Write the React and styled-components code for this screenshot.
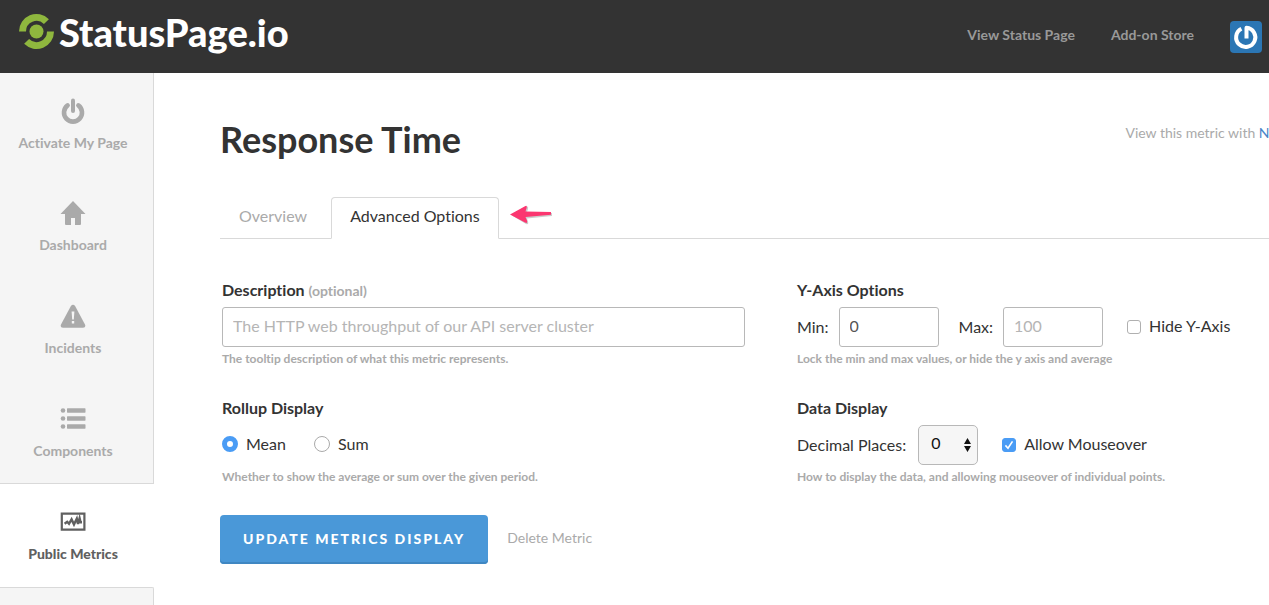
import React, { useState } from "react";
import styled, { createGlobalStyle, ThemeProvider } from "styled-components";

const theme = {
  font: '"Lato", "Open Sans", sans-serif',
  header: "#333333",
  text: "#333333",
  muted: "#aaaaaa",
  line: "#d9d9d9",
  field: "#b8b8b8",
  side: "#f5f5f5",
  green: "#8fb73e",
  blue: "#4a98d8",
  check: "#4a9cf5",
};

const GlobalStyle = createGlobalStyle`
  * {
    box-sizing: border-box;
  }

  body {
    margin: 0;
    background: #ffffff;
    color: ${({ theme }) => theme.text};
    font-family: ${({ theme }) => theme.font};
    font-size: 16px;
    font-variant-ligatures: none;
    line-height: 20px;
  }

  input, select, button {
    font: inherit;
    color: inherit;
  }

  a {
    text-decoration: none;
  }
`;

const Page = styled.div`
  display: flex;
  flex-direction: column;
  height: 100vh;
  overflow: hidden;
`;

const Header = styled.header`
  display: flex;
  flex: none;
  align-items: center;
  justify-content: space-between;
  height: 73px;
  padding: 0 7px 0 18px;
  background: ${({ theme }) => theme.header};
`;

const Logo = styled.a`
  display: flex;
  align-items: center;
  gap: 4px;
  padding-bottom: 10px;
  color: #ffffff;
  font-size: 38px;
  font-weight: 900;
  line-height: 40px;
`;

const TopNav = styled.nav`
  display: flex;
  align-items: center;
  gap: 36px;
`;

const TopLink = styled.a`
  padding-bottom: 3px;
  color: #999999;
  font-size: 14px;
  font-weight: 700;
`;

const Avatar = styled.button`
  display: flex;
  align-items: center;
  justify-content: center;
  width: 32px;
  height: 32px;
  padding: 0;
  border: none;
  border-radius: 4px;
  background: #2b76b4;
  cursor: pointer;
`;

const Body = styled.div`
  display: flex;
  flex: 1;
  min-height: 0;
`;

const Sidebar = styled.nav`
  display: flex;
  flex: none;
  flex-direction: column;
  width: 154px;
`;

const SideLink = styled.a`
  display: flex;
  flex: none;
  flex-direction: column;
  align-items: center;
  gap: 9px;
  height: 103px;
  padding: 25px 7px 0 0;
  border-right: 1px solid ${({ theme, $active }) => ($active ? "transparent" : theme.line)};
  background: ${({ theme, $active }) => ($active ? "#ffffff" : theme.side)};
  box-shadow: ${({ theme, $active }) => ($active ? `0 -1px 0 ${theme.line}` : "none")};
  color: ${({ theme, $active }) => ($active ? "#606060" : theme.muted)};
  font-size: 14px;
  font-weight: ${({ $active }) => ($active ? 900 : 700)};
  white-space: nowrap;

  &:first-child {
    height: 102px;
  }
`;

const SideRest = styled.div`
  flex: 1;
  border: solid ${({ theme }) => theme.line};
  border-width: 1px 1px 0 0;
  border-top-right-radius: 2px;
  background: ${({ theme }) => theme.side};
`;

const Main = styled.main`
  flex: 1;
  min-width: 0;
  padding: 47px 0 0 66px;
  overflow: hidden;
`;

const Content = styled.div`
  min-width: 1100px;
`;

const TitleRow = styled.div`
  display: flex;
  align-items: flex-start;
  justify-content: space-between;
`;

const Title = styled.h1`
  margin: 0;
  font-size: 36px;
  font-weight: 700;
  line-height: 38px;
`;

const MetricNote = styled.p`
  margin: 0;
  padding-top: 3px;
  color: ${({ theme }) => theme.muted};
  font-size: 14px;

  a {
    color: #4a86c8;
  }
`;

const Tabs = styled.div`
  display: flex;
  align-items: flex-end;
  gap: 5px;
  height: 42px;
  margin-top: 39px;
  box-shadow: inset 0 -1px 0 ${({ theme }) => theme.line};
`;

const Tab = styled.button`
  height: 42px;
  padding: 0 18px 4px;
  border: 1px solid transparent;
  border-radius: 4px 4px 0 0;
  background: transparent;
  color: ${({ theme }) => theme.muted};
  cursor: pointer;

  &[aria-selected="true"] {
    border-color: ${({ theme }) => theme.line};
    border-bottom-color: #ffffff;
    background: #ffffff;
    color: ${({ theme }) => theme.text};
  }
`;

const Pointer = styled.svg`
  margin: 0 0 12px 5px;
`;

const Fields = styled.form`
  padding-top: 41px;
`;

const FieldGrid = styled.div`
  display: grid;
  grid-template-columns: 1fr 1fr;
  gap: 31px 52px;
  padding-left: 2px;
`;

const Group = styled.fieldset`
  display: flex;
  flex-direction: column;
  min-width: 0;
  margin: 0;
  padding: 0;
  border: none;
`;

const GroupLabel = styled.legend`
  padding: 0;
  margin-bottom: 7px;
  font-weight: 700;

  span {
    color: ${({ theme }) => theme.muted};
    font-size: 14px;
    line-height: 1;
  }
`;

const Controls = styled.div`
  display: flex;
  align-items: center;
  gap: ${({ $gap }) => $gap || 24}px;
  height: 40px;
`;

const TextInput = styled.input`
  width: ${({ $short }) => ($short ? "100px" : "100%")};
  height: 40px;
  padding: 0 10px 4px;
  border: 1px solid ${({ theme }) => theme.field};
  border-radius: 3px;
  background: #ffffff;
  color: #555555;
  outline: none;

  &::placeholder {
    color: #b5b5b5;
    opacity: 1;
  }
`;

const InlineLabel = styled.label`
  display: flex;
  align-items: center;
  gap: ${({ $gap }) => $gap || 12}px;
  white-space: nowrap;
`;

const CheckLabel = styled(InlineLabel)`
  gap: 8px;
  padding-bottom: 3px;
`;

const Checkbox = styled.input`
  appearance: none;
  width: 14px;
  height: 14px;
  margin: 3px 0 0;
  border: 1px solid #b0b0b0;
  border-radius: 3px;
  background: #ffffff;

  &:checked {
    border-color: ${({ theme }) => theme.check};
    background: ${({ theme }) => theme.check};
  }
`;

const CheckWrap = styled.span`
  position: relative;
  display: flex;

  svg {
    position: absolute;
    top: 3px;
    left: 0;
    pointer-events: none;
  }
`;

const Radio = styled.input`
  appearance: none;
  width: 16px;
  height: 16px;
  margin: 0;
  border: 1px solid #aaaaaa;
  border-radius: 50%;
  background: #ffffff;

  &:checked {
    border: 5px solid ${({ theme }) => theme.check};
  }
`;

const SelectWrap = styled.span`
  position: relative;
  display: flex;

  svg {
    position: absolute;
    top: 12px;
    right: 6px;
    pointer-events: none;
  }
`;

const Select = styled.select`
  appearance: none;
  width: 60px;
  height: 40px;
  padding: 0 12px 4px;
  border: 1px solid ${({ theme }) => theme.field};
  border-radius: 5px;
  background: #f6f6f6;
  color: #111111;
`;

const Hint = styled.p`
  margin: 4px 0 0;
  color: ${({ theme }) => theme.muted};
  font-size: 12px;
  font-weight: 700;
  line-height: 16px;
`;

const Actions = styled.div`
  display: flex;
  align-items: center;
  gap: 19px;
  margin-top: 30px;
`;

const SubmitButton = styled.button`
  height: 49px;
  padding: 0 23px 2px;
  border: none;
  border-radius: 4px;
  background: ${({ theme }) => theme.blue};
  box-shadow: inset 0 -2px 0 #3f87c2;
  color: #ffffff;
  font-size: 14px;
  font-weight: 900;
  letter-spacing: 2px;
  text-transform: uppercase;
  cursor: pointer;
`;

const DeleteLink = styled.a`
  padding-bottom: 3px;
  color: ${({ theme }) => theme.muted};
  font-size: 14px;
`;

const LogoMark = () => (
  <svg width="37" height="37" viewBox="0 0 37 37" aria-hidden="true">
    <circle cx="18.5" cy="18.5" r="7" fill={theme.green} />
    <g fill="none" stroke={theme.green} strokeWidth="7">
      <path d="M4.5 18.5A14 14 0 0 1 28.4 8.6" />
      <path d="M32.5 18.5A14 14 0 0 1 8.6 28.4" />
    </g>
  </svg>
);

const PowerMark = () => (
  <svg width="26" height="26" viewBox="0 0 26 26" fill="none" stroke="#ffffff" strokeWidth="4" aria-hidden="true">
    <path d="M8.4 4.8A9.6 9.6 0 1 0 13.5 3.8V14.5" strokeLinejoin="round" />
  </svg>
);

const PowerIcon = () => (
  <svg width="26" height="26" viewBox="0 0 26 26" fill="none" stroke="currentColor" strokeLinecap="round" aria-hidden="true">
    <path d="M13 2.5V13" strokeWidth="4" />
    <path d="M7.6 7.4A9 9 0 1 0 18.4 7.4" strokeWidth="4.6" />
  </svg>
);

const HomeIcon = () => (
  <svg width="26" height="26" viewBox="0 0 26 26" fill="currentColor" aria-hidden="true">
    <path d="M13 1L25.5 14H21V24a1 1 0 0 1-1 1H15V18H11V25H6a1 1 0 0 1-1-1V14H.5Z" />
  </svg>
);

const WarningIcon = () => (
  <svg width="26" height="26" viewBox="0 0 26 26" aria-hidden="true">
    <path
      fill="currentColor"
      d="M10.9 3Q13 .4 15.1 3L25 21.4Q26.2 24.5 23 24.7H3Q-.2 24.5 1 21.4Z"
    />
    <path d="M11.6 8.5h2.8l-.6 8h-1.6zM11.8 18h2.4v2.4h-2.4z" fill="#f5f5f5" />
  </svg>
);

const ListIcon = () => (
  <svg width="26" height="26" viewBox="0 0 26 26" fill="currentColor" aria-hidden="true">
    {[4.5, 12.5, 20.5].map((y) => (
      <g key={y}>
        <circle cx="3" cy={y} r="2.3" />
        <rect x="7" y={y - 2.2} width="18.5" height="4.4" rx=".6" />
      </g>
    ))}
  </svg>
);

const MetricsIcon = () => (
  <svg width="26" height="26" viewBox="0 0 26 26" fill="none" stroke="currentColor" strokeWidth="2.2" aria-hidden="true">
    <path d="M1.8 4.6H24.4V20.6H1.8Z" />
    <path d="M4.6 14.8L7.2 12.8L9 14.8L11.6 10.4L14 15.4L16.8 9.6L18 15L19.6 9.2L20.6 13.2H22" strokeWidth="2.4" />
  </svg>
);

const PAGES = [
  { label: "Activate My Page", Icon: PowerIcon },
  { label: "Dashboard", Icon: HomeIcon },
  { label: "Incidents", Icon: WarningIcon },
  { label: "Components", Icon: ListIcon },
  { label: "Public Metrics", Icon: MetricsIcon, active: true },
];

const TABS = ["Overview", "Advanced Options"];

function CheckField({ id, label, checked, onChange }) {
  return (
    <CheckLabel htmlFor={id}>
      <CheckWrap>
        <Checkbox id={id} type="checkbox" checked={checked} onChange={(e) => onChange(e.target.checked)} />
        {checked && (
          <svg width="14" height="14" viewBox="0 0 14 14" fill="none" stroke="#ffffff" strokeWidth="1.6">
            <path d="M3.4 7.4L6 10.2L10.5 3.4" />
          </svg>
        )}
      </CheckWrap>
      {label}
    </CheckLabel>
  );
}

export default function App() {
  const [tab, setTab] = useState("Advanced Options");
  const [rollup, setRollup] = useState("Mean");
  const [hideAxis, setHideAxis] = useState(false);
  const [mouseover, setMouseover] = useState(true);

  return (
    <ThemeProvider theme={theme}>
      <GlobalStyle />
      <Page>
        <Header>
          <Logo href="#">
            <LogoMark />
            StatusPage.io
          </Logo>
          <TopNav>
            <TopLink href="#status">View Status Page</TopLink>
            <TopLink href="#store">Add-on Store</TopLink>
            <Avatar type="button" aria-label="Account">
              <PowerMark />
            </Avatar>
          </TopNav>
        </Header>

        <Body>
          <Sidebar>
            {PAGES.map(({ label, Icon, active }) => (
              <SideLink key={label} href="#" $active={active}>
                <Icon />
                {label}
              </SideLink>
            ))}
            <SideRest />
          </Sidebar>

          <Main>
            <Content>
              <TitleRow>
                <Title>Response Time</Title>
                <MetricNote>
                  View this metric with <a href="#provider">New Relic</a>
                </MetricNote>
              </TitleRow>

              <Tabs role="tablist">
                {TABS.map((name) => (
                  <Tab key={name} type="button" role="tab" aria-selected={tab === name} onClick={() => setTab(name)}>
                    {name}
                  </Tab>
                ))}
                <Pointer width="46" height="24" viewBox="0 0 46 24" aria-hidden="true">
                  <path d="M3 12.5L17 21Q20 22 19 18.5L18 15.5L43 13V10L18 9L19 6Q20 2 16 4.5Z" fill="#000000" opacity=".2" />
                  <path d="M1 11.5L16 3.2Q18.5 2 17.6 5L16.5 8.6L42 9V11.8L16.5 14L18 17.5Q19 21 16 19.5Z" fill="#fb3670" />
                </Pointer>
              </Tabs>

              <Fields onSubmit={(e) => e.preventDefault()}>
                <FieldGrid>
                  <Group>
                    <GroupLabel>
                      <label htmlFor="description">Description</label> <span>(optional)</span>
                    </GroupLabel>
                    <TextInput
                      id="description"
                      type="text"
                      placeholder="The HTTP web throughput of our API server cluster"
                    />
                    <Hint>The tooltip description of what this metric represents.</Hint>
                  </Group>

                  <Group>
                    <GroupLabel>Y-Axis Options</GroupLabel>
                    <Controls>
                      <Controls $gap={20}>
                        <InlineLabel $gap={10}>
                          Min:
                          <TextInput $short type="text" defaultValue="0" />
                        </InlineLabel>
                        <InlineLabel $gap={10}>
                          Max:
                          <TextInput $short type="text" placeholder="100" />
                        </InlineLabel>
                      </Controls>
                      <CheckField id="hide-axis" label="Hide Y-Axis" checked={hideAxis} onChange={setHideAxis} />
                    </Controls>
                    <Hint>Lock the min and max values, or hide the y axis and average</Hint>
                  </Group>

                  <Group>
                    <GroupLabel>Rollup Display</GroupLabel>
                    <Controls $gap={28}>
                      {["Mean", "Sum"].map((name) => (
                        <CheckLabel key={name}>
                          <Radio
                            type="radio"
                            name="rollup"
                            value={name}
                            checked={rollup === name}
                            onChange={() => setRollup(name)}
                          />
                          {name}
                        </CheckLabel>
                      ))}
                    </Controls>
                    <Hint>Whether to show the average or sum over the given period.</Hint>
                  </Group>

                  <Group>
                    <GroupLabel>Data Display</GroupLabel>
                    <Controls>
                      <InlineLabel>
                        Decimal Places:
                        <SelectWrap>
                          <Select defaultValue="0">
                            {[0, 1, 2, 3, 4, 5].map((n) => (
                              <option key={n}>{n}</option>
                            ))}
                          </Select>
                          <svg width="9" height="16" viewBox="0 0 9 16" fill="#111111" aria-hidden="true">
                            <path d="M4.5 1L8 7H1ZM4.5 15L1 9H8Z" />
                          </svg>
                        </SelectWrap>
                      </InlineLabel>
                      <CheckField id="mouseover" label="Allow Mouseover" checked={mouseover} onChange={setMouseover} />
                    </Controls>
                    <Hint>How to display the data, and allowing mouseover of individual points.</Hint>
                  </Group>
                </FieldGrid>

                <Actions>
                  <SubmitButton type="submit">Update Metrics Display</SubmitButton>
                  <DeleteLink href="#delete">Delete Metric</DeleteLink>
                </Actions>
              </Fields>
            </Content>
          </Main>
        </Body>
      </Page>
    </ThemeProvider>
  );
}
